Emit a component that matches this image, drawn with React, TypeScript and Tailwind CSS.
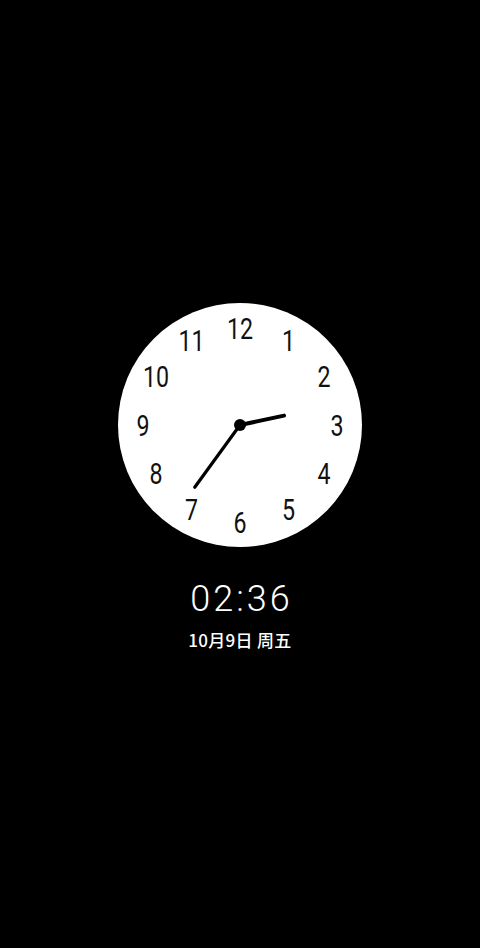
export default function App() {
  const cx = 123
  const cy = 123
  const r = 122
  const numR = 97
  const nums = [12, 1, 2, 3, 4, 5, 6, 7, 8, 9, 10, 11]
  const hourAngle = ((2 + 36 / 60) / 12) * Math.PI * 2
  const minAngle = (36 / 60) * Math.PI * 2

  return (
    <div className="flex h-[948px] w-full flex-col items-center bg-black pt-[302px]">
      <svg width="246" height="246" viewBox="0 0 246 246">
        <circle cx={cx} cy={cy} r={r} fill="#fff" />
        {nums.map((n, i) => {
          const a = (i / 12) * Math.PI * 2
          const x = cx + Math.sin(a) * numR
          const y = cy - Math.cos(a) * numR + 10.5
          return (
            <text
              key={n}
              transform={`translate(${x} ${y}) scale(0.8 1)`}
              textAnchor="middle"
              fontFamily="Roboto, 'Liberation Sans', sans-serif"
              fontSize="29"
              fill="#111"
            >
              {n}
            </text>
          )
        })}
        <line
          x1={cx}
          y1={cy}
          x2={cx + Math.sin(hourAngle) * 45}
          y2={cy - Math.cos(hourAngle) * 45}
          stroke="#000"
          strokeWidth="4"
          strokeLinecap="round"
        />
        <line
          x1={cx}
          y1={cy}
          x2={cx + Math.sin(minAngle) * 77}
          y2={cy - Math.cos(minAngle) * 77}
          stroke="#000"
          strokeWidth="3.2"
          strokeLinecap="round"
        />
        <circle cx={cx} cy={cy} r="6" fill="#000" />
      </svg>
      <div className="mt-[33px] pl-[3px] font-['Roboto',sans-serif] text-[36px] font-light leading-none tracking-[3px] text-white">
        02:36
      </div>
      <div className="mt-[14px] font-['Noto_Sans_CJK_SC',sans-serif] text-[17px] font-medium leading-none tracking-[0.3px] text-white">
        10月9日&nbsp;周五
      </div>
    </div>
  )
}
